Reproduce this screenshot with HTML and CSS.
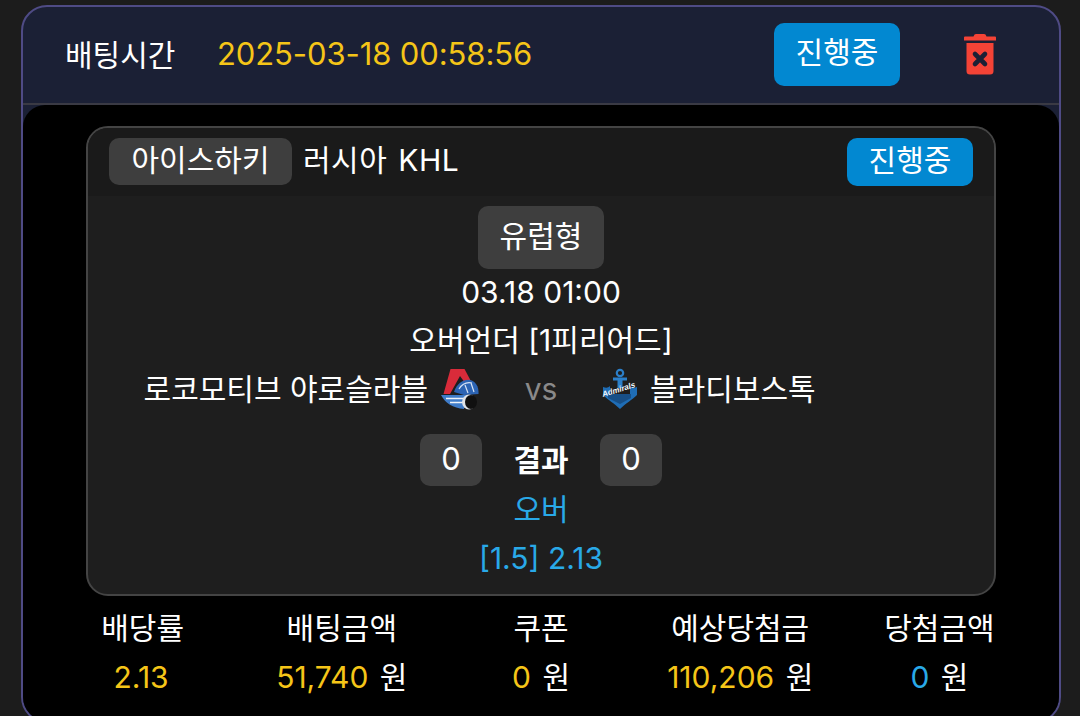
FILE: index.html
```html
<!DOCTYPE html>
<html lang="ko">
<head>
  <meta charset="UTF-8">
  <meta name="viewport" content="width=device-width, initial-scale=1.0">
  <title>배팅내역</title>
  <link rel="stylesheet" href="styles.css">
</head>
<body>
  <div class="bet-card">
    <div class="bet-head">
      <span class="bet-time-label">배팅시간</span>
      <span class="bet-time">2025-03-18 00:58:56</span>
      <span class="status-btn status-btn-lg">진행중</span>
      <svg class="trash" width="32" height="42" viewBox="0 0 32 42">
        <path d="M10 2.500Q10 1 12 1H20Q22 1 22 2.500L22.500 3.500H31Q32 3.500 32 4.500V7.500H0V4.500Q0 3.500 1 3.500H9.500Z" fill="#f44336"/>
        <path d="M2.500 10H29.500V38Q29.500 41.500 26 41.500H6Q2.500 41.500 2.500 38Z" fill="#f44336"/>
        <path d="M11 21L21 31M21 21L11 31" stroke="#1b2035" stroke-width="4.600" stroke-linecap="round"/>
      </svg>
    </div>

    <div class="bet-body">
      <div class="game">
        <div class="game-head">
          <span class="tag">아이스하키</span>
          <span class="league">러시아 KHL</span>
          <span class="status-btn">진행중</span>
        </div>
        <div class="game-main">
          <span class="game-type">유럽형</span>
          <div class="game-line">03.18 01:00</div>
          <div class="game-line">오버언더 [1피리어드]</div>
          <div class="teams">
            <div class="team team-home">
              <span class="team-name">로코모티브 야로슬라블</span>
              <svg class="logo" width="40" height="42" viewBox="0 0 40 42">
                <path d="M10.500 1H24.500L33 17L28 19L20 8L10 26H3.500Z" fill="#d92b3a"/>
                <path d="M14 24C17 15 24 11 30 12C35 13 39 18 38.500 26L24 27Z" fill="#2c64b4"/>
                <path d="M19 21C22 16 27 14 32 15M25 17L28 25M31 15L34 24" stroke="#d6e3f5" stroke-width="1.200" fill="none"/>
                <path d="M1 27H26L24 41C13 40 5 35 1 27Z" fill="#3f7cc9"/>
                <path d="M6 30.500H25M10 34.500H25" stroke="#eef3fa" stroke-width="1.700"/>
                <ellipse cx="29" cy="34" rx="7" ry="7.500" fill="#dfe3e8"/>
                <ellipse cx="31" cy="34" rx="6" ry="7" fill="#101010"/>
              </svg>
            </div>
            <span class="vs">vs</span>
            <div class="team team-away">
              <svg class="logo" width="35" height="42" viewBox="0 0 35 42">
                <circle cx="18" cy="5" r="3.200" fill="none" stroke="#2b7fc9" stroke-width="2.200"/>
                <path d="M11 9.500H25V12.500H20.500V20H15.500V12.500H11Z" fill="#2b7fc9"/>
                <path d="M1 19C4 20 6 20 8 18V26H28V18C30 20 32 20 35 19V27C30 32 24 35 18 41C12 35 6 32 1 27Z" fill="#1f6db5"/>
                <path d="M6 26H29V30L18 36L6 30Z" fill="#174f87"/>
                <text class="logo-script" x="1" y="29" transform="rotate(-17 1 29)">Admirals</text>
              </svg>
              <span class="team-name">블라디보스톡</span>
            </div>
          </div>
          <div class="score-row">
            <span class="score">0</span>
            <span class="score-label">결과</span>
            <span class="score">0</span>
          </div>
          <div class="pick">오버</div>
          <div class="pick">[1.5] 2.13</div>
        </div>
      </div>

      <div class="stats">
        <div class="stat">
          <div class="stat-name">배당률</div>
          <div class="stat-value"><b>2.13</b></div>
        </div>
        <div class="stat">
          <div class="stat-name">배팅금액</div>
          <div class="stat-value"><b>51,740</b> 원</div>
        </div>
        <div class="stat">
          <div class="stat-name">쿠폰</div>
          <div class="stat-value"><b>0</b> 원</div>
        </div>
        <div class="stat">
          <div class="stat-name">예상당첨금</div>
          <div class="stat-value"><b>110,206</b> 원</div>
        </div>
        <div class="stat">
          <div class="stat-name">당첨금액</div>
          <div class="stat-value"><b class="blue">0</b> 원</div>
        </div>
      </div>
    </div>
  </div>
</body>
</html>
```

FILE: styles.css
```css
html, body {
  margin: 0;
  padding: 0;
  height: 716px;
  overflow: hidden;
  background-color: #1c1c1c;
  color: #fff;
  font-family: Inter, "Noto Sans CJK KR", sans-serif;
}

.bet-card {
  width: 1040px;
  height: 718px;
  margin: 5px 0 0 21px;
  box-sizing: border-box;
  background-color: #1b2035;
  border: 2px solid #4f4b85;
  border-radius: 26px;
  overflow: hidden;
}

.bet-head {
  height: 98px;
  box-sizing: border-box;
  display: flex;
  align-items: center;
  padding: 0 63px 2px 42px;
  border-bottom: 2px solid #3a3a44;
  font-size: 30px;
}

.bet-time-label {
  width: 152px;
  margin-bottom: 2px;
}

.bet-time {
  flex: 1;
  margin-bottom: 2px;
  color: #f5c518;
  font-size: 31px;
  letter-spacing: -0.100px;
}

.status-btn {
  margin-left: auto;
  width: 126px;
  height: 48px;
  line-height: 44px;
  text-align: center;
  background-color: #0288d1;
  border-radius: 10px;
  font-size: 30px;
}

.status-btn-lg {
  height: 63px;
  line-height: 58px;
  margin-right: 64px;
}

.trash {
  display: block;
  margin-bottom: 1px;
}

.bet-body {
  height: 620px;
  background-color: #000;
  border-radius: 22px 22px 0 0;
  padding: 21px 20px 0;
}

.game {
  width: 910px;
  height: 470px;
  margin: 0 auto;
  box-sizing: border-box;
  background-color: #1e1e1e;
  border: 2px solid #444;
  border-radius: 22px;
  overflow: hidden;
}

.game-head {
  height: 68px;
  box-sizing: border-box;
  display: flex;
  align-items: center;
  padding: 0 21px 1px;
  background-color: #1a1a1a;
  font-size: 30px;
}

.tag {
  width: 183px;
  height: 47px;
  line-height: 45px;
  text-align: center;
  background-color: #3e3e3e;
  border-radius: 10px;
}

.league {
  margin: 0 0 8px 11px;
  word-spacing: 2px;
  letter-spacing: 0.500px;
}

.game-main {
  display: flex;
  flex-direction: column;
  align-items: center;
  padding-top: 10px;
  font-size: 30px;
}

.game-type {
  width: 126px;
  height: 63px;
  line-height: 60px;
  text-align: center;
  background-color: #3e3e3e;
  border-radius: 10px;
}

.game-line {
  height: 48px;
  line-height: 46px;
}

.teams {
  width: 100%;
  height: 48px;
  display: flex;
  align-items: center;
  justify-content: center;
}

.team {
  flex: 1;
  display: flex;
  align-items: center;
  gap: 13px;
}

.team-home {
  justify-content: flex-end;
  gap: 12px;
}

.team-name {
  margin-bottom: 5px;
}

.vs {
  width: 122px;
  text-align: center;
  color: #8a8a8a;
}

.logo {
  display: block;
  flex: none;
}

.logo-script {
  font-family: "Liberation Sans", sans-serif;
  font-size: 8px;
  font-weight: 700;
  font-style: italic;
  fill: #f2f7fc;
}

.score-row {
  display: flex;
  align-items: center;
  margin-top: 21px;
}

.score {
  width: 62px;
  height: 52px;
  line-height: 50px;
  text-align: center;
  background-color: #3e3e3e;
  border-radius: 10px;
  font-size: 31px;
}

.score-label {
  width: 118px;
  margin-bottom: 5px;
  text-align: center;
  font-weight: 700;
}

.pick {
  height: 49px;
  line-height: 47px;
  color: #29a9e8;
}

.stats {
  display: flex;
  margin-top: 7px;
}

.stat {
  flex: 1;
  text-align: center;
  font-size: 30px;
}

.stat-name {
  height: 50px;
  line-height: 50px;
}

.stat-value {
  height: 50px;
  line-height: 48px;
}

.stat-value b {
  font-weight: 400;
  color: #f5c518;
  margin-right: 3px;
}

.stat-value b.blue {
  color: #29a9e8;
}
```
